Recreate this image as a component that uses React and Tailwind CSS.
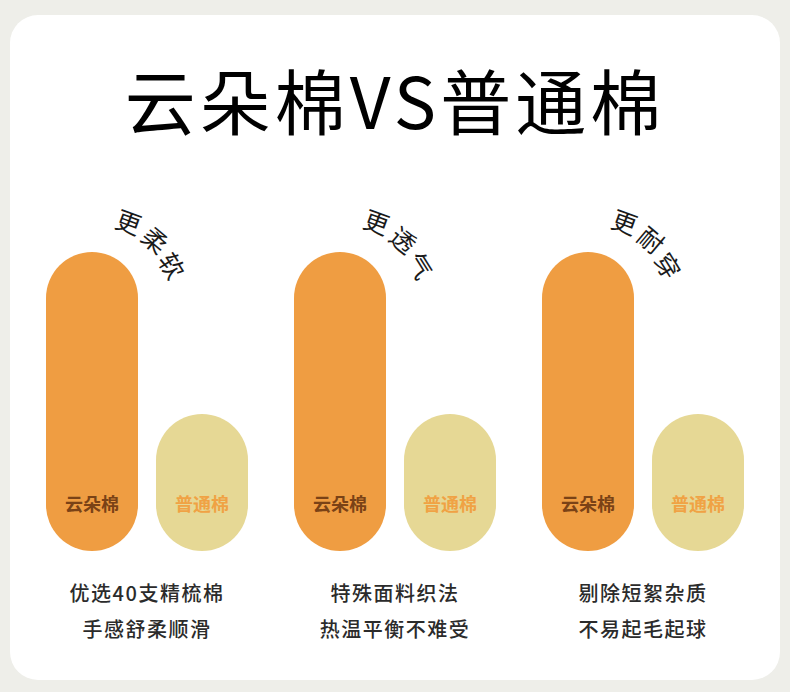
const groups = [
  { arc: ['更', '柔', '软'], lines: ['优选40支精梳棉', '手感舒柔顺滑'] },
  { arc: ['更', '透', '气'], lines: ['特殊面料织法', '热温平衡不难受'] },
  { arc: ['更', '耐', '穿'], lines: ['剔除短絮杂质', '不易起毛起球'] },
];

const font = { fontFamily: '"Noto Sans CJK SC", "Noto Sans", sans-serif' };

function ArcLabel({ chars }) {
  return (
    <>
      <span className="absolute left-[69px] top-[-45px] w-[28px] h-[28px] flex items-center justify-center text-[25px] leading-none text-[#1a1a1a] rotate-[20deg]">{chars[0]}</span>
      <span className="absolute left-[96px] top-[-27px] w-[28px] h-[28px] flex items-center justify-center text-[25px] leading-none text-[#1a1a1a] rotate-[40deg]">{chars[1]}</span>
      <span className="absolute left-[113px] top-[-1px] w-[28px] h-[28px] flex items-center justify-center text-[25px] leading-none text-[#1a1a1a] rotate-[58deg]">{chars[2]}</span>
    </>
  );
}

function Group({ arc, lines }) {
  return (
    <div className="flex flex-col items-center w-[202px]">
      <div className="relative flex items-end gap-[18px]">
        <ArcLabel chars={arc} />
        <div className="w-[92px] h-[299px] rounded-[46px] bg-[#ef9d42] flex flex-col justify-end items-center pb-[36px]">
          <span className="text-[18px] font-bold leading-[24px] text-[#7a4216]">云朵棉</span>
        </div>
        <div className="w-[92px] h-[137px] rounded-[46px] bg-[#e6d895] flex flex-col justify-end items-center pb-[36px]">
          <span className="text-[18px] font-bold leading-[24px] text-[#f0a244]">普通棉</span>
        </div>
      </div>
      <div className="mt-[24px] flex flex-col items-center text-[20px] font-medium leading-[36px] tracking-[1.5px] text-[#2b2b2b] whitespace-nowrap">
        <span>{lines[0]}</span>
        <span>{lines[1]}</span>
      </div>
    </div>
  );
}

export default function App() {
  return (
    <div className="w-[790px] h-[692px] bg-[#eeeee9] pt-[15px] px-[10px]" style={font}>
      <div className="w-[770px] h-[665px] bg-white rounded-[28px] flex flex-col items-center">
        <h1 className="mt-[48px] text-[71px] leading-none font-normal tracking-[4px] text-black whitespace-nowrap">云朵棉VS普通棉</h1>
        <div className="mt-[118px] flex justify-center gap-[46px]">
          {groups.map((g, i) => (
            <Group key={i} arc={g.arc} lines={g.lines} />
          ))}
        </div>
      </div>
    </div>
  );
}
